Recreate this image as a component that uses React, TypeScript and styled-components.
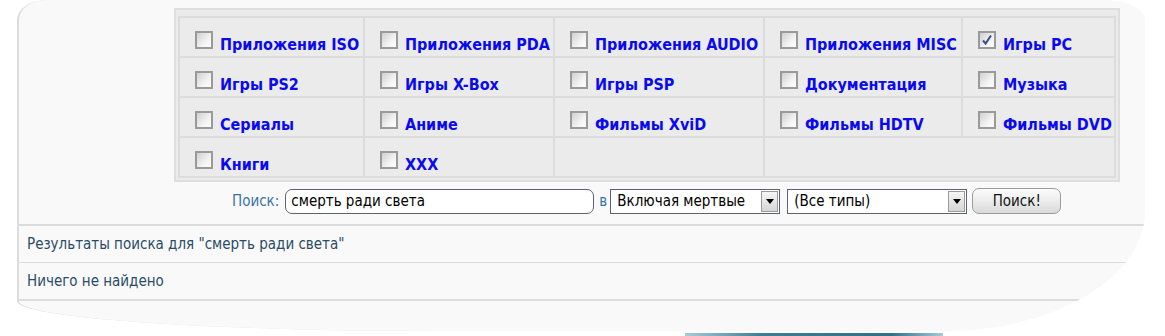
import React from "react";
import styled, { createGlobalStyle } from "styled-components";

const Global = createGlobalStyle`
  html, body { margin: 0; padding: 0; background: #ffffff; }
  body { width: 1165px; height: 336px; overflow: hidden; font-family: "DejaVu Sans", Verdana, sans-serif; }
`;

const Page = styled.div`
  width: 1165px;
  height: 336px;
  display: flex;
  flex-direction: column;
`;

const Panel = styled.div`
  margin-left: 17px;
  width: 1128px;
  height: 331px;
  box-sizing: border-box;
  background: #f9f9f9;
  border-left: 2px solid #dcdcdc;
  border-top-left-radius: 30px 20px;
  border-top-right-radius: 40px 20px;
  border-bottom-right-radius: 200px 120px;
  border-bottom-left-radius: 420px 30px;
  overflow: hidden;
  padding-top: 8px;
  display: flex;
  flex-direction: column;
`;

const Table = styled.div`
  margin-left: 155px;
  width: 946px;
  box-sizing: border-box;
  background: #ebebeb;
  border: 2px solid #dedede;
  padding: 6px 2px 2px 2px;
`;

const Grid = styled.div`
  display: grid;
  grid-template-columns: 183px 188px 208px 196px 1fr;
  grid-auto-rows: 38px;
  gap: 2px;
  background: #dcdcdc;
  border: 2px solid #dcdcdc;
`;

const Cell = styled.label<{ $span?: number }>`
  grid-column: span ${(p) => p.$span ?? 1};
  background: #ebebeb;
  display: flex;
  align-items: flex-start;
  padding: 13px 0 0 15px;
  box-sizing: border-box;
  white-space: nowrap;
  overflow: hidden;
`;

const Box = styled.span`
  flex: none;
  width: 18px;
  height: 18px;
  box-sizing: border-box;
  border: 2px solid #9a9a9a;
  background: linear-gradient(135deg, #d0d0d0 0%, #f2f2f2 60%, #ffffff 100%);
  margin-right: 7px;
  display: flex;
  align-items: center;
  justify-content: center;
`;

const CatText = styled.span`
  font-family: "DejaVu Sans Condensed", "DejaVu Sans", Verdana, sans-serif;
  font-stretch: condensed;
  font-weight: bold;
  font-size: 16px;
  line-height: 18px;
  margin-top: 5px;
  color: #0a0af0;
`;

const SearchRow = styled.div`
  display: flex;
  align-items: center;
  margin: 6px 0 0 213px;
  height: 26px;
  font-family: "DejaVu Sans Condensed", "DejaVu Sans", Tahoma, sans-serif;
  font-size: 15px;
`;

const SearchLabel = styled.span`
  color: #3a74a6;
  margin-right: 6px;
`;

const Input = styled.div`
  width: 309px;
  height: 25px;
  box-sizing: border-box;
  border: 1px solid #5c6270;
  border-radius: 7px;
  background: #fff;
  color: #000;
  padding: 0 5px;
  display: flex;
  align-items: center;
`;

const InWord = styled.span`
  color: #3a74a6;
  margin: 0 3px 0 5px;
`;

const Select = styled.div<{ $w: number }>`
  width: ${(p) => p.$w}px;
  height: 25px;
  box-sizing: border-box;
  border: 1px solid #5c6270;
  background: #fff;
  color: #000;
  display: flex;
  align-items: stretch;
  margin-right: 7px;
`;

const SelectValue = styled.span`
  flex: 1;
  display: flex;
  align-items: center;
  padding-left: 6px;
`;

const Arrow = styled.span`
  width: 17px;
  margin: 1px;
  box-sizing: border-box;
  border: 1px solid #9a9a9a;
  background: linear-gradient(180deg, #f6f6f6, #d6d6d6);
  display: flex;
  align-items: center;
  justify-content: center;
`;

const Tri = styled.span`
  width: 0;
  height: 0;
  border-left: 4px solid transparent;
  border-right: 4px solid transparent;
  border-top: 5px solid #000;
`;

const Button = styled.div`
  width: 89px;
  height: 26px;
  box-sizing: border-box;
  margin-left: -2px;
  border: 1px solid #9c9c9c;
  border-radius: 7px;
  background: linear-gradient(180deg, #fbfbfb 0%, #ececec 50%, #dadada 100%);
  color: #111;
  display: flex;
  align-items: center;
  justify-content: center;
`;

const Divider = styled.div<{ $h: number; $top?: number }>`
  height: ${(p) => p.$h}px;
  margin-top: ${(p) => p.$top ?? 0}px;
  background: #dcdcdc;
`;

const ResultRow = styled.div`
  height: 36px;
  display: flex;
  align-items: center;
  padding-left: 8px;
  font-family: "DejaVu Sans Condensed", "DejaVu Sans", Tahoma, sans-serif;
  font-size: 15px;
  color: #2b4c68;
`;

const Strip = styled.div`
  margin: 2px 0 0 685px;
  width: 258px;
  height: 3px;
  background: linear-gradient(90deg, #a9cbd8 0%, #3d7d97 30%, #2f6f8a 80%, #a9cbd8 100%);
`;

const cats: { t: string; c?: boolean }[][] = [
  [
    { t: "Приложения ISO" },
    { t: "Приложения PDA" },
    { t: "Приложения AUDIO" },
    { t: "Приложения MISC" },
    { t: "Игры PC", c: true },
  ],
  [
    { t: "Игры PS2" },
    { t: "Игры X-Box" },
    { t: "Игры PSP" },
    { t: "Документация" },
    { t: "Музыка" },
  ],
  [
    { t: "Сериалы" },
    { t: "Аниме" },
    { t: "Фильмы XviD" },
    { t: "Фильмы HDTV" },
    { t: "Фильмы DVD" },
  ],
  [{ t: "Книги" }, { t: "XXX" }],
];

const Check = () => (
  <svg width="12" height="12" viewBox="0 0 12 12">
    <path d="M2 6.5 L4.6 9.5 L10 1.5" fill="none" stroke="#3c4f86" strokeWidth="2" />
  </svg>
);

export default function App() {
  return (
    <Page>
      <Global />
      <Panel>
        <Table>
          <Grid>
            {cats.flat().map((c, i) => (
              <Cell key={i}>
                <Box>{c.c ? <Check /> : null}</Box>
                <CatText>{c.t}</CatText>
              </Cell>
            ))}
            <Cell />
            <Cell $span={2} />
          </Grid>
        </Table>
        <SearchRow>
          <SearchLabel>Поиск:</SearchLabel>
          <Input>смерть ради света</Input>
          <InWord>в</InWord>
          <Select $w={170}>
            <SelectValue>Включая мертвые</SelectValue>
            <Arrow>
              <Tri />
            </Arrow>
          </Select>
          <Select $w={180}>
            <SelectValue>(Все типы)</SelectValue>
            <Arrow>
              <Tri />
            </Arrow>
          </Select>
          <Button>Поиск!</Button>
        </SearchRow>
        <Divider $h={2} $top={10} />
        <ResultRow>Результаты поиска для "смерть ради света"</ResultRow>
        <Divider $h={1} />
        <ResultRow>Ничего не найдено</ResultRow>
        <Divider $h={2} />
      </Panel>
      <Strip />
    </Page>
  );
}
